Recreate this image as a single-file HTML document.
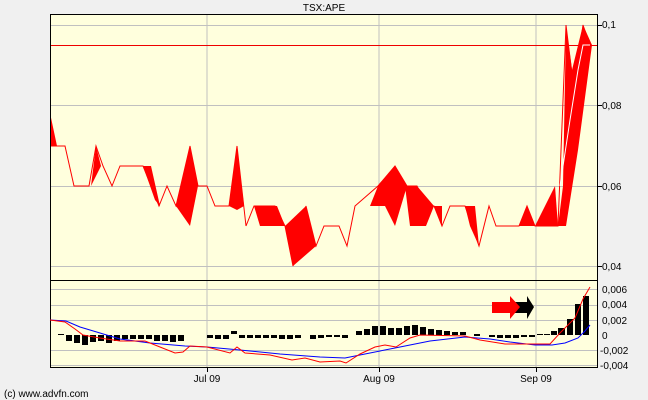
<!DOCTYPE html><html><head><style>body{margin:0;background:#f0f0f0;width:648px;height:400px;overflow:hidden;font-family:"Liberation Sans",sans-serif}</style></head><body>
<svg width="648" height="400" style="position:absolute;left:0;top:0" font-family="Liberation Sans, sans-serif" font-size="10">
<rect x="50" y="14" width="548" height="354" fill="#ffffdd"/>
<g stroke="#c0c0c0" stroke-width="1">
<line x1="207" y1="14" x2="207" y2="368"/><line x1="379" y1="14" x2="379" y2="368"/><line x1="536" y1="14" x2="536" y2="368"/>
<line x1="50" y1="25.5" x2="598" y2="25.5"/><line x1="50" y1="105.5" x2="598" y2="105.5"/><line x1="50" y1="186.5" x2="598" y2="186.5"/><line x1="50" y1="266.5" x2="598" y2="266.5"/>
<line x1="50" y1="289.5" x2="598" y2="289.5"/><line x1="50" y1="305.5" x2="598" y2="305.5"/><line x1="50" y1="320.5" x2="598" y2="320.5"/><line x1="50" y1="350.5" x2="598" y2="350.5"/><line x1="50" y1="365.5" x2="598" y2="365.5"/>
</g>
<line x1="50" y1="45.5" x2="598" y2="45.5" stroke="#e00" stroke-width="1"/>
<g fill="#f00">
<polygon points="50,113 57,146 50,146"/>
<polygon points="91,186 96,146 101,166"/>
<polygon points="143,166 151,166 160,206 155,200"/>
<polygon points="176,206 190,146 198,186 190,226"/>
<polygon points="229,206 237,146 244,206 237,210"/>
<polygon points="254,206 277,206 285,226 260,226"/>
<polygon points="285,226 306,206 316,246 293,266"/>
<polygon points="370,206 378,186 395,166 407,186 395,226 385,206"/>
<polygon points="405,186 417,186 434,206 426,226 410,226"/>
<polygon points="434,206 442,206 442,226"/>
<polygon points="465,206 475,206 479,246 470,226"/>
<polygon points="519,226 527,206 535,226"/>
<polygon points="535,226 545,206 555,186 558,226"/>
<polygon points="558,226 563,186 566,25 572,70 583,25 592,45 578,150 566,226"/>
</g>
<polyline fill="none" stroke="#f00" stroke-width="1" points="50,146 65,146 74,186 89,186 96,146 103,166 112,186 120,166 143,166 159,206 167,186 176,206 190,146 198,186 207,186 215,206 229,206 237,146 246,226 254,206 275,206 285,226 293,266 306,206 316,246 324,226 339,226 347,246 355,206 378,186 395,166 407,186 417,186 426,206 434,206 442,226 450,206 465,206 479,246 489,206 496,226 519,226 527,206 535,226 558,226 566,25 574,90 583,25 590,45"/>
<polyline fill="none" stroke="#fff" stroke-width="1" points="560,186 570,120 578,70 583,45 590,45"/>
<line x1="50" y1="280.5" x2="598" y2="280.5" stroke="#000"/>
<rect x="50.5" y="14.5" width="547" height="353" fill="none" stroke="#000"/>
<g fill="#000">
<rect x="58" y="334" width="6" height="1"/>
<rect x="66" y="335" width="6" height="6"/><rect x="74" y="335" width="6" height="8"/><rect x="82" y="335" width="6" height="10"/><rect x="90" y="335" width="6" height="7"/><rect x="98" y="335" width="6" height="6"/><rect x="106" y="335" width="6" height="8"/><rect x="114" y="335" width="6" height="6"/><rect x="122" y="335" width="6" height="4"/><rect x="130" y="335" width="6" height="4"/><rect x="138" y="335" width="6" height="4"/><rect x="146" y="335" width="6" height="4"/><rect x="154" y="335" width="6" height="6"/><rect x="162" y="335" width="6" height="6"/><rect x="170" y="335" width="6" height="7"/><rect x="178" y="335" width="6" height="6"/>
<rect x="207" y="335" width="6" height="3"/><rect x="215" y="335" width="6" height="4"/><rect x="223" y="335" width="6" height="4"/><rect x="231" y="331" width="6" height="3"/><rect x="239" y="335" width="6" height="3"/><rect x="247" y="335" width="6" height="3"/><rect x="255" y="335" width="6" height="3"/><rect x="263" y="335" width="6" height="3"/><rect x="271" y="335" width="6" height="3"/><rect x="279" y="335" width="6" height="4"/><rect x="287" y="335" width="6" height="4"/><rect x="295" y="335" width="6" height="3"/><rect x="310" y="335" width="6" height="4"/><rect x="318" y="335" width="6" height="3"/><rect x="326" y="335" width="6" height="2"/><rect x="334" y="335" width="6" height="2"/><rect x="342" y="335" width="6" height="3"/>
<rect x="356" y="331" width="6" height="4"/><rect x="364" y="329" width="6" height="6"/><rect x="372" y="326" width="6" height="9"/><rect x="380" y="326" width="6" height="9"/><rect x="388" y="328" width="6" height="7"/><rect x="396" y="328" width="6" height="7"/><rect x="404" y="326" width="6" height="9"/><rect x="412" y="325" width="6" height="10"/><rect x="420" y="327" width="6" height="8"/><rect x="428" y="329" width="6" height="6"/><rect x="436" y="330" width="6" height="5"/><rect x="444" y="331" width="6" height="4"/><rect x="452" y="332" width="6" height="3"/><rect x="460" y="332" width="6" height="3"/>
<rect x="474" y="334" width="6" height="2"/><rect x="489" y="335" width="6" height="2"/><rect x="497" y="335" width="6" height="3"/><rect x="505" y="335" width="6" height="3"/><rect x="513" y="335" width="6" height="3"/><rect x="521" y="335" width="6" height="2"/><rect x="529" y="335" width="6" height="2"/><rect x="537" y="334" width="6" height="1"/><rect x="544" y="334" width="6" height="1"/>
<rect x="551" y="331" width="6" height="4"/><rect x="558" y="328" width="7" height="7"/><rect x="567" y="319" width="6" height="16"/><rect x="575" y="304" width="6" height="31"/><rect x="583" y="296" width="6" height="39"/>
<polygon points="515,302 527,302 527,296 534,307 527,319 527,313 515,313"/>
</g>
<polygon fill="#f00" points="492,302 510,302 510,296 520,307 510,319 510,313 492,313"/>
<polyline fill="none" stroke="#00f" stroke-width="1" points="50,320 66,321 80,327 100,333 120,339 150,343 185,346 207,347 240,350 280,354 320,357 345,358 370,353 400,347 430,341 465,337 490,339 510,342 535,345 552,345 565,343 578,338 585,331 590,325"/>
<polyline fill="none" stroke="#f00" stroke-width="1" points="50,320 65,322 75,329 83,335 100,338 120,341 145,341 160,347 175,353 183,352 190,346 207,347 230,353 237,347 245,353 270,355 292,360 305,358 320,362 340,361 346,363 360,354 375,347 385,345 396,347 410,338 420,335 465,336 480,340 505,344 530,344 550,344 560,333 575,318 583,299 590,287"/>
<g fill="#000">
<text x="324" y="11" text-anchor="middle">TSX:APE</text>
<text x="602" y="28">0,1</text><text x="602" y="109">0,08</text><text x="602" y="190">0,06</text><text x="602" y="270">0,04</text>
<text x="602" y="293">0,006</text><text x="602" y="308">0,004</text><text x="602" y="324">0,002</text><text x="602" y="339">0</text><text x="600" y="354">-0,002</text><text x="600" y="369">-0,004</text>
<text x="207" y="382" text-anchor="middle">Jul 09</text><text x="379" y="382" text-anchor="middle">Aug 09</text><text x="536" y="382" text-anchor="middle">Sep 09</text>
<text x="4" y="397">(c) www.advfn.com</text>
</g>
<g stroke="#000"><line x1="598" y1="25.5" x2="602" y2="25.5"/><line x1="598" y1="105.5" x2="602" y2="105.5"/><line x1="598" y1="186.5" x2="602" y2="186.5"/><line x1="598" y1="266.5" x2="602" y2="266.5"/>
<line x1="207.5" y1="368" x2="207.5" y2="372"/><line x1="379.5" y1="368" x2="379.5" y2="372"/><line x1="536.5" y1="368" x2="536.5" y2="372"/></g>
</svg>
</body></html>
